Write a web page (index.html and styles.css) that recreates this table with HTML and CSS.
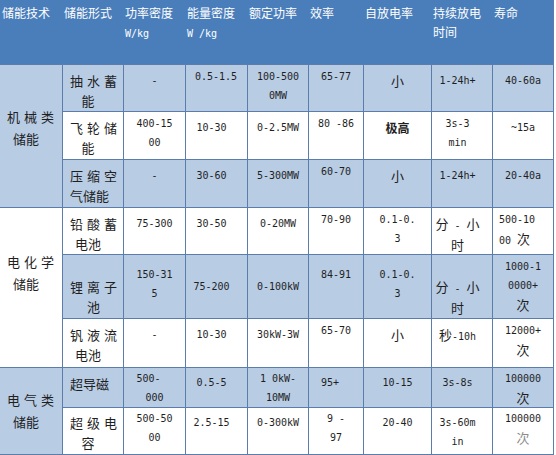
FILE: index.html
```
<!DOCTYPE html>
<html lang="zh">
<head>
<meta charset="utf-8">
<title>储能技术对比</title>
<link rel="stylesheet" href="styles.css">
</head>
<body>
<div class="tbl">
  <div class="hd">
    <div class="h h1">储能技术</div>
    <div class="h">储能形式</div>
    <div class="h">功率密度<br><span class="hn">W/kg</span></div>
    <div class="h">能量密度<br><span class="hn">W /kg</span></div>
    <div class="h">额定功率</div>
    <div class="h">效率</div>
    <div class="h">自放电率</div>
    <div class="h">持续放电<br>时间</div>
    <div class="h">寿命</div>
  </div>

  <div class="g L g1"><span class="j">机械类</span><span class="s2">储能</span></div>
  <div class="c L k2 va"><span class="j">抽水蓄</span><span class="t2">能</span></div>
  <div class="c L k3 n va">-</div>
  <div class="c L k4 s5 n vb">0.5-1.5</div>
  <div class="c L k5 n vb">100-500<br>0MW</div>
  <div class="c L k6 n vb">65-77</div>
  <div class="c L k7 va">小</div>
  <div class="c L k8 n va">1-24h+</div>
  <div class="c L k9 n va">40-60a</div>

  <div class="c k2 va"><span class="j">飞轮储</span><span class="t2">能</span></div>
  <div class="c k3 n vb">400-15<br>00</div>
  <div class="c k4 n va">10-30</div>
  <div class="c k5 n va">0-2.5MW</div>
  <div class="c k6 n vb">80 -86</div>
  <div class="c k7 va bold">极高</div>
  <div class="c k8 n vb">3s-3<br>min</div>
  <div class="c k9 n va">~15a</div>

  <div class="c L k2 va"><span class="j">压缩空</span><span class="t2">气储能</span></div>
  <div class="c L k3 n va">-</div>
  <div class="c L k4 n va">30-60</div>
  <div class="c L k5 n va">5-300MW</div>
  <div class="c L k6 n vb">60-70</div>
  <div class="c L k7 va">小</div>
  <div class="c L k8 n va">1-24h+</div>
  <div class="c L k9 n va">20-40a</div>

  <div class="g g2"><span class="j">电化学</span><span class="s2">储能</span></div>
  <div class="c k2 va"><span class="j">铅酸蓄</span><span class="t2">电池</span></div>
  <div class="c k3 n va">75-300</div>
  <div class="c k4 n va">30-50</div>
  <div class="c k5 n va">0-20MW</div>
  <div class="c k6 n vb">70-90</div>
  <div class="c k7 n vb">0.1-0.<br>3</div>
  <div class="c k8 n va"><span class="z">分</span> - <span class="z">小</span><br><span class="z">时</span></div>
  <div class="c k9 lf n vb">500-10<br>00 <span class="z">次</span></div>

  <div class="c L k2 vc"><span class="j">锂离子</span><span class="t2 cc">池</span></div>
  <div class="c L k3 n vd">150-31<br>5</div>
  <div class="c L k4 n vc">75-200</div>
  <div class="c L k5 n vc">0-100kW</div>
  <div class="c L k6 n vd">84-91</div>
  <div class="c L k7 n vd">0.1-0.<br>3</div>
  <div class="c L k8 n vc"><span class="z">分</span> - <span class="z">小</span><br><span class="z">时</span></div>
  <div class="c L k9 n vb">1000-1<br>0000+<br><span class="z">次</span></div>

  <div class="c k2 va"><span class="j">钒液流</span><span class="t2">电池</span></div>
  <div class="c k3 n va">-</div>
  <div class="c k4 n va">10-30</div>
  <div class="c k5 n va">30kW-3W</div>
  <div class="c k6 n vb">65-70</div>
  <div class="c k7 va">小</div>
  <div class="c k8 n va"><span class="z">秒</span>-10h</div>
  <div class="c k9 n vb">12000+<br><span class="z">次</span></div>

  <div class="g L g3"><span class="j">电气类</span><span class="s2">储能</span></div>
  <div class="c L k2 va"><span class="t2">超导磁</span></div>
  <div class="c L k3 n vt">500-<span class="tr"></span><br>000</div>
  <div class="c L k4 n va2">0.5-5</div>
  <div class="c L k5 n vt">1 0kW-<br>10MW</div>
  <div class="c L k6 n va2">95+<span class="tr"></span></div>
  <div class="c L k7 n va2">10-15</div>
  <div class="c L k8 n va2">3s-8s</div>
  <div class="c L k9 n vt">100000<br><span class="z">次</span></div>

  <div class="c k2 va2"><span class="j">超级电</span><span class="t2">容</span></div>
  <div class="c k3 n vt">500-50<br>00</div>
  <div class="c k4 n va2">2.5-15</div>
  <div class="c k5 n va2">0-300kW</div>
  <div class="c k6 n vt">9 -<br>97</div>
  <div class="c k7 n va2">20-40</div>
  <div class="c k8 n va2">3s-60m<br>in</div>
  <div class="c k9 n vt">100000<br><span class="z wm">次</span></div>
</div>
</body>
</html>
```

FILE: styles.css
```
html, body {
  margin: 0;
  padding: 0;
  background: #ffffff;
}

body {
  width: 556px;
  height: 455px;
  overflow: hidden;
  font-family: "Noto Sans CJK SC", "Noto Sans", sans-serif;
  color: #1f1f1f;
}

.tbl {
  display: grid;
  grid-template-columns: 62px 60px 61px 61px 60px 54px 67px 60px 60px;
  grid-template-rows: 64px 46px 47px 47px 46px 63px 48px 39px 46px;
  gap: 1px;
  padding: 0 1px 1px 0;
  width: max-content;
  background: #5b7dab;
}

.hd {
  grid-column: 1 / -1;
  display: grid;
  grid-template-columns: 62px 60px 61px 61px 60px 54px 67px 60px 60px;
  column-gap: 1px;
  background: #4a7ebb;
  color: #ffffff;
  font-size: 12px;
  line-height: 19px;
}

.h {
  padding: 3px 0 0 1px;
  white-space: nowrap;
}

.h1 {
  padding-left: 2px;
}

.hn {
  font-family: "DejaVu Sans Mono", monospace;
  font-size: 10px;
}

.c {
  background: #ffffff;
  font-size: 13px;
  line-height: 20px;
  white-space: nowrap;
}

.L {
  background: #b8cce4;
}

.g {
  grid-row: span 3;
  background: #ffffff;
  font-size: 13px;
  line-height: 22px;
  padding-left: 7px;
  padding-right: 8px;
}

.g.L {
  background: #b8cce4;
}

.g3 {
  grid-row: span 2;
}

.g1 { padding-top: 41px; }
.g2 { padding-top: 43px; }
.g3 { padding-top: 21px; }

.j {
  display: block;
  text-align: justify;
  text-align-last: justify;
}

.s2 {
  display: block;
  text-align: center;
  margin-right: 9px;
}

.n {
  font-family: "DejaVu Sans Mono", monospace;
  font-size: 10px;
  line-height: 19px;
}

.z {
  font-family: "Noto Sans CJK SC", sans-serif;
  font-size: 13px;
}

.wm {
  color: #8c8c8c;
}

.bold {
  font-weight: 700;
  font-size: 12px;
}

/* columns */
.k2 {
  white-space: normal;
  padding-left: 7px;
  padding-right: 6px;
}

.t2 {
  display: block;
  text-align: center;
  margin-right: 11px;
  white-space: nowrap;
}

.t2.cc {
  margin-right: 0;
}

.k3, .k5, .k6, .k7, .k9 {
  text-align: center;
}

.k4 {
  text-align: center;
  padding-left: 4px;
  padding-right: 14px;
}

.k4.s5 {
  text-align: left;
  padding-left: 9px;
  padding-right: 0;
}

.k8 {
  text-align: center;
  padding-left: 2px;
  padding-right: 11px;
}

.k9.lf {
  text-align: left;
  padding-left: 6px;
}

.tr {
  display: inline-block;
  width: 12px;
}

/* vertical offsets */
.va { padding-top: 6px; }
.va2 { padding-top: 5px; }
.vb { padding-top: 2px; }
.vt { padding-top: 1px; }
.vc { padding-top: 22px; }
.vd { padding-top: 10px; }
```
